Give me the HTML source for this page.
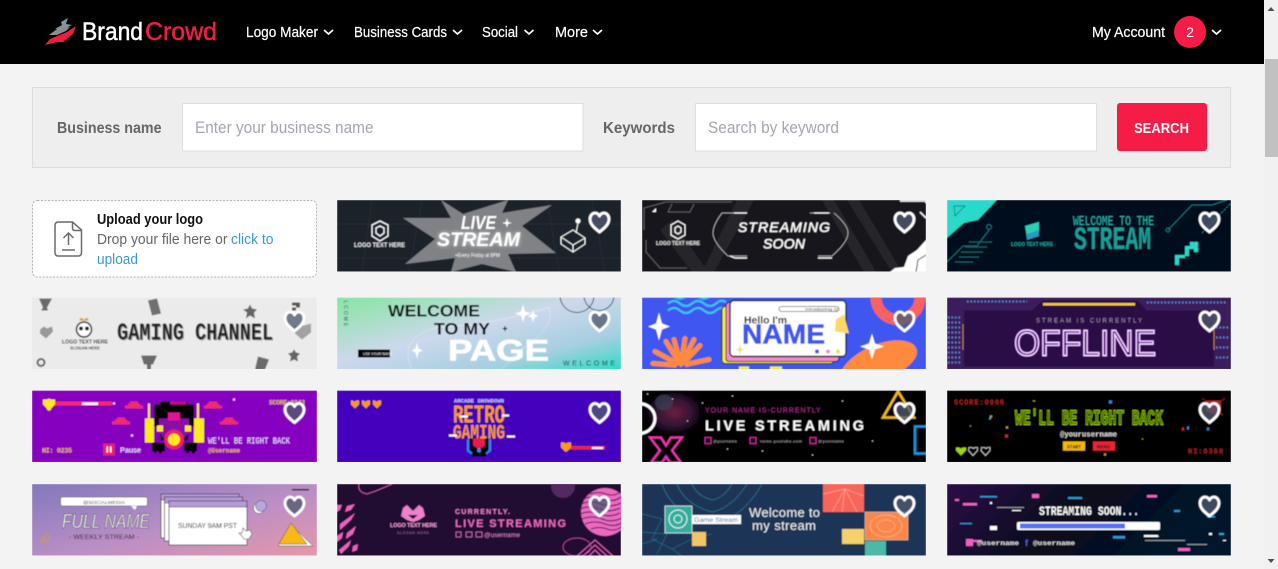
<!DOCTYPE html>
<html lang="en"><head><meta charset="utf-8"><title>BrandCrowd</title>
<style>
html,body{margin:0;padding:0;width:1278px;height:569px;overflow:hidden;background:#f3f3f3}
svg{display:block}
text{font-family:"Liberation Sans",sans-serif}
.m{font-family:"Liberation Mono",monospace;font-weight:700}
.b{font-weight:700}
</style></head><body>
<svg width="1278" height="569" viewBox="0 0 1278 569" xmlns="http://www.w3.org/2000/svg">
<defs>
<filter id="s" x="-5%" y="-5%" width="110%" height="110%"><feGaussianBlur stdDeviation="0.4"/></filter>
<filter id="g" x="-30%" y="-50%" width="160%" height="200%"><feGaussianBlur stdDeviation="2.2"/></filter>
<path id="h" d="M0 10.5C-5 6.5-9.5 3-9.5-2.500-9.5-6-7-8.500-4.500-8.500-2.500-8.500-1-7.500 0-5.500 1-7.500 2.500-8.500 4.500-8.500 7-8.500 9.500-6 9.500-2.500 9.500 3 5 6.500 0 10.500Z" fill="#505a72" fill-opacity=".78" stroke="#fff" stroke-width="2.800" stroke-linejoin="round"/>
<path id="c" d="M-9 1h3v-2h2v-2h8v2h2v2h3v3h-18Z" fill="#f22a70"/>
<linearGradient id="gw" x1="0" y1="0" x2="1" y2="1"><stop offset="0" stop-color="#86e6a2"/><stop offset=".45" stop-color="#cdd8ec"/><stop offset=".75" stop-color="#a5cfe0"/><stop offset="1" stop-color="#2fdcc4"/></linearGradient>
<linearGradient id="gf" x1="0" y1="0" x2="1" y2="1"><stop offset="0" stop-color="#8378bd"/><stop offset=".55" stop-color="#bb8fc5"/><stop offset="1" stop-color="#e697a8"/></linearGradient>
<linearGradient id="gs" x1="0" y1="0" x2="1" y2=".25"><stop offset="0" stop-color="#2c0a48"/><stop offset=".5" stop-color="#08081c"/><stop offset="1" stop-color="#04192c"/></linearGradient>
<radialGradient id="gn" cx=".5" cy=".5" r=".5"><stop offset="0" stop-color="#6c2040"/><stop offset=".6" stop-color="#2a1030"/><stop offset="1" stop-color="#000" stop-opacity="0"/></radialGradient>
</defs>

<!-- page -->
<rect width="1278" height="569" fill="#f3f3f3"/>
<rect width="1264" height="64" fill="#000"/>

<!-- logo -->
<path d="M55 29 62 25 61 22 68 18 66 24 72 25 64 29Z" fill="#8595a0"/>
<path d="M49 35 57 29 70 27 66 31 57 35Z" fill="#8c8c8c"/>
<path d="M45 45 50 39 57 36 67 32 76 26 73 34 63 42 57 42Z" fill="#ee1c3f"/>
<text x="82" y="40" font-size="25" fill="#fff" stroke="#fff" stroke-width=".5" textLength="61" lengthAdjust="spacingAndGlyphs">Brand</text>
<text x="145" y="40" font-size="25" fill="#f01e45" stroke="#f01e45" stroke-width=".5" textLength="72" lengthAdjust="spacingAndGlyphs">Crowd</text>

<!-- nav -->
<g font-size="15" fill="#fff" stroke="#fff" stroke-width=".2">
<text x="246" y="37" textLength="72" lengthAdjust="spacingAndGlyphs">Logo Maker</text>
<text x="354" y="37" textLength="93" lengthAdjust="spacingAndGlyphs">Business Cards</text>
<text x="482" y="37" textLength="36" lengthAdjust="spacingAndGlyphs">Social</text>
<text x="555" y="37" textLength="33" lengthAdjust="spacingAndGlyphs">More</text>
<text x="1092" y="37" textLength="73" lengthAdjust="spacingAndGlyphs">My Account</text>
</g>
<g fill="none" stroke="#fff" stroke-width="1.700">
<path d="M324 30l4.500 4 4.500-4M453 30l4.500 4 4.500-4M524.500 30l4.500 4 4.500-4M593 30l4.500 4 4.500-4M1212 30l4.500 4 4.500-4"/>
</g>
<circle cx="1190" cy="32" r="16" fill="#f51c47"/>
<text x="1190" y="37" font-size="14" fill="#fff" text-anchor="middle">2</text>

<!-- scrollbar -->
<rect x="1264" width="14" height="569" fill="#f1f1f1"/>
<rect x="1265" y="59" width="13" height="98" fill="#c1c1c1"/>
<path d="M1267.500 11l3.500-4 3.500 4Z" fill="#505050"/>
<path d="M1267.500 559l3.500 4 3.500-4Z" fill="#505050"/>

<!-- search -->
<rect x="32.500" y="87.500" width="1198" height="80" fill="#eee" stroke="#dcdcdc"/>
<text x="57" y="133" font-size="16" fill="#666" class="b" textLength="104.500" lengthAdjust="spacingAndGlyphs">Business name</text>
<rect x="182.500" y="103.500" width="400.500" height="47.500" fill="#fff" stroke="#dedede"/>
<text x="195" y="133" font-size="16.500" fill="#a4a7b0" textLength="178.500" lengthAdjust="spacingAndGlyphs">Enter your business name</text>
<text x="603" y="133" font-size="16" fill="#666" class="b" textLength="72" lengthAdjust="spacingAndGlyphs">Keywords</text>
<rect x="695.500" y="103.500" width="401" height="47.500" fill="#fff" stroke="#dedede"/>
<text x="708" y="133" font-size="16.500" fill="#a4a7b0" textLength="131" lengthAdjust="spacingAndGlyphs">Search by keyword</text>
<rect x="1117" y="103" width="90" height="48" rx="3" fill="#f51c47"/>
<text x="1134" y="133" font-size="14.500" fill="#fff" class="b" textLength="55" lengthAdjust="spacingAndGlyphs">SEARCH</text>

<!-- upload -->
<rect x="32.500" y="200.500" width="284" height="76.500" rx="5" fill="#fff" stroke="#b5b5b5" stroke-dasharray="2 1.500"/>
<path d="M58.500 222H72.500L81.500 230V252.500Q81.500 256 78 256H58.500Q55 256 55 252.500V225.500Q55 222 58.500 222ZM72.500 222V228Q72.500 230.500 75 230.500H81.500" fill="none" stroke="#6a6a6a" stroke-width="1.500"/>
<path d="M68.500 245V233M63.500 238l5-5 5 5M62 250H75" fill="none" stroke="#6a6a6a" stroke-width="1.500"/>
<text x="97" y="224" font-size="14.500" fill="#111" class="b" textLength="106" lengthAdjust="spacingAndGlyphs">Upload your logo</text>
<text x="97" y="244" font-size="14.500" fill="#666" textLength="130.500" lengthAdjust="spacingAndGlyphs">Drop your file here or</text>
<text x="231" y="244" font-size="14.500" fill="#3a9ad0" textLength="42.500" lengthAdjust="spacingAndGlyphs">click to</text>
<text x="97" y="264" font-size="14.500" fill="#3a9ad0" textLength="41" lengthAdjust="spacingAndGlyphs">upload</text>

<!-- R1 C2 live stream -->
<svg x="337" y="200" width="284" height="71.500" viewBox="0 0 284 71.500"><g filter="url(#s)">
<rect width="284" height="72" fill="#1f242b"/>
<path d="M35 0 25 71M85 0 72 71M210 0 222 71M255 0 268 71M0 24H284M0 58H284" stroke="#2c3239" stroke-width=".6"/>
<path d="M104 0 126 14 171 0 165 13 215 5 185 26 219 53 171 54 179 72 145 64 114 72 118 58 68 64 98 39 66 18 114 18Z" fill="#808285"/>
<path d="M43 21l8 4v11l-8 5-8-5V25ZM43 26l4 2v5l-4 3-4-3v-5Z" fill="none" stroke="#fff" stroke-width="1.300"/>
<text x="17" y="47" font-size="6" fill="#e8e8e8" class="b" textLength="51" lengthAdjust="spacingAndGlyphs">LOGO TEXT HERE</text>
<text x="100" y="46" font-size="19" fill="#fff" class="b" font-style="italic" textLength="83" lengthAdjust="spacingAndGlyphs" filter="url(#g)" opacity=".7">STREAM</text>
<text x="124" y="29" font-size="18" fill="#fff" class="b" font-style="italic" textLength="35" lengthAdjust="spacingAndGlyphs">LIVE</text>
<text x="100" y="46" font-size="19" fill="#fff" class="b" font-style="italic" textLength="83" lengthAdjust="spacingAndGlyphs">STREAM</text>
<path d="M170 18l1 4 4 1-4 1-1 4-1-4-4-1 4-1Z" fill="#fff"/>
<text x="118" y="57" font-size="5" fill="#fff" textLength="45" lengthAdjust="spacingAndGlyphs">+Every Friday at 8PM</text>
<path d="M224 37 236 30 248 38 248 44 236 52 224 44ZM224 37 236 45 248 38M236 45V52M239 33 241 23" fill="none" stroke="#fff" stroke-width="1"/>
<circle cx="241" cy="21" r="2.500" fill="#fff"/>
<use href="#h" x="262.500" y="21.500"/>
</g></svg>

<!-- R1 C3 streaming soon -->
<svg x="642" y="200" width="284" height="71.500" viewBox="0 0 284 71.500"><g filter="url(#s)">
<rect width="284" height="72" fill="#17191c"/>
<path d="M60 72 95 0H112L72 72ZM180 0 222 72H234L192 0ZM205 0 250 72H260L217 0ZM30 20 66 72H50L18 30Z" fill="#25282c"/>
<path d="M2 30V8L24 2H90M30 4 26 12H48L52 4M4 40V52L18 68H45" fill="none" stroke="#6a6e72" stroke-width=".8"/>
<path d="M10 12l4-4v4Z" fill="#fff"/>
<path d="M86 13H105L80 13Q71 25 71 33 71 42 86 56H105M188 13H168M192 13Q206 25 206 33 206 42 190 56H176" fill="none" stroke="#c8c8c8" stroke-width=".7"/>
<path d="M92 13H105M172 13H187M88 56l5 2H105M176 58H190" stroke="#fff" stroke-width="1.200" fill="none"/>
<text x="96" y="32" font-size="14" fill="#fff" font-style="italic" stroke="#fff" stroke-width=".35" textLength="92" lengthAdjust="spacing">STREAMING</text>
<text x="121" y="48.500" font-size="14" fill="#fff" font-style="italic" stroke="#fff" stroke-width=".35" textLength="42" lengthAdjust="spacing">SOON</text>
<path d="M36 21l7 4v10l-7 4-7-4V25ZM36 26l3 2v4l-3 2-3-2v-4Z" fill="none" stroke="#fff" stroke-width="1.200"/>
<text x="14" y="45" font-size="5.500" fill="#e8e8e8" class="b" textLength="44" lengthAdjust="spacingAndGlyphs">LOGO TEXT HERE</text>
<path d="M248 72 253 68 262 67 266 56 275 50 284 40V72Z" fill="#fff"/>
<path d="M274 72 276 60 284 55" stroke="#333" fill="none" stroke-width="1"/>
<path d="M258 1H284V3M278 12 284 18" stroke="#fff" stroke-width="1.500" fill="none"/>
<use href="#h" x="262.500" y="21.500"/>
</g></svg>

<!-- R1 C4 welcome stream -->
<svg x="947" y="200" width="284" height="71.500" viewBox="0 0 284 71.500"><g filter="url(#s)">
<rect width="284" height="72" fill="#020b1f"/>
<path d="M0 0H50L31 20 17 23 0 38Z" fill="#2bd9cb"/>
<path d="M7 6H18L8 16Z" fill="none" stroke="#0d6a70" stroke-width=".7"/>
<path d="M0 62 16 46H30L42 30" fill="none" stroke="#1a8f90" stroke-width=".7"/>
<circle cx="42" cy="27" r="2.500" fill="none" stroke="#1a8f90" stroke-width=".7"/>
<path d="M22 42H45M18 47H40M14 52H36M12 57H32M8 62H26" stroke="#12626a" stroke-width="1.200"/>
<path d="M221 30 245 5H265L280 0" fill="none" stroke="#1a8f90" stroke-width=".7"/>
<circle cx="221" cy="30" r="2" fill="none" stroke="#1a8f90" stroke-width=".7"/>
<path d="M255 33 284 3" stroke="#1a9a9a" stroke-width=".8" stroke-dasharray="2 1.500"/>
<path d="M78 26 92 22 92 36 80 40Z" fill="#2b9bc0"/>
<path d="M78 26 92 22 92 30 80 34Z" fill="#2bd0b8"/>
<text x="64" y="46" font-size="5" fill="#1fa8a8" class="b" textLength="42" lengthAdjust="spacingAndGlyphs">LOGO TEXT HERE</text>
<text x="126" y="25" font-size="14" fill="#2bb5ae" font-family="Liberation Mono" style="font-family:'Liberation Mono',monospace" textLength="81" lengthAdjust="spacingAndGlyphs">WELCOME TO THE</text>
<text x="127" y="49" font-size="32" fill="#1f9d98" class="m" textLength="77" lengthAdjust="spacingAndGlyphs">STREAM</text>
<path d="M228 55H238V58H232V65H228ZM238 46H248V49H242V56H238ZM249 42H251V52H247V46H243V42Z" fill="#2bd9cb"/>
<use href="#h" x="262.500" y="21.500"/>
</g></svg>

<!-- R2 C1 gaming -->
<svg x="32" y="297.500" width="285" height="71.500" viewBox="0 0 285 71.500"><g filter="url(#s)">
<rect width="285" height="72" fill="#ebebeb"/>
<path d="M7 1H20L15 10 16 13H9L11 10Z" fill="#6a6a6a"/>
<path d="M153 3 162 1 166 16 157 18Z" transform="translate(-37 0)" fill="#6f6f6f"/>
<path d="M218 7l2 4 5 1-3 3 1 6-5-3-4 3 1-6-4-3 5-1Z" fill="#666"/>
<path d="M260 5h8v5h-4v3h-4v-3h4V8h-4Z" fill="#555"/>
<path d="M8 32 12 29 15 31 20 29 21 34 14 41 8 36Z" fill="#999"/>
<path d="M262 28 272 28 279 26 279 35 270 42 263 36Z" fill="#a2a2a2"/>
<path d="M109 58H125L121 67H119V72H115V67H112Z" fill="#6a6a6a"/>
<path d="M226 59 237 62 233 72H223Z" fill="#6a6a6a"/>
<path d="M262 52l2 3 4 1-3 3 1 5-4-2-4 2 1-5-3-3 4-1Z" fill="#666"/>
<circle cx="9" cy="65" r="3.500" fill="none" stroke="#666" stroke-width="2"/>
<circle cx="52" cy="32" r="7.500" fill="#fff" stroke="#222" stroke-width="1.500"/>
<circle cx="49" cy="31" r="2" fill="#222"/><circle cx="55" cy="31" r="2" fill="#222"/>
<path d="M47 23l2-3 3 2 3-2 2 3Z" fill="#d9a520"/>
<text x="30" y="46" font-size="5.500" fill="#222" class="b" textLength="46" lengthAdjust="spacingAndGlyphs">LOGO TEXT HERE</text>
<text x="38" y="52" font-size="4.500" fill="#333" class="b" textLength="30" lengthAdjust="spacingAndGlyphs">SLOGAN HERE</text>
<text x="86" y="43" font-size="24" fill="#9a9a9a" class="m" textLength="156" lengthAdjust="spacingAndGlyphs">GAMING CHANNEL</text>
<text x="85" y="42" font-size="24" fill="#222" class="m" textLength="156" lengthAdjust="spacingAndGlyphs">GAMING CHANNEL</text>
<use href="#h" x="262.500" y="23"/>
</g></svg>

<!-- R2 C2 welcome page -->
<svg x="337" y="297.500" width="284" height="71.500" viewBox="0 0 284 71.500"><g filter="url(#s)">
<rect width="284" height="72" fill="url(#gw)"/>
<path d="M75 72Q60 40 100 30 150 28 212 10 220 30 180 55 170 65 165 72" fill="none" stroke="#fff" stroke-opacity=".6" stroke-width=".5"/>
<circle cx="240" cy="-2" r="17" fill="none" stroke="#222" stroke-width=".8"/>
<circle cx="262" cy="-2" r="15" fill="none" stroke="#222" stroke-width=".8"/>
<text x="7" y="3" font-size="5" fill="#333" transform="rotate(90 7 3)" letter-spacing="2">LCOME</text>
<text x="51" y="19" font-size="17" fill="#111" class="b" textLength="92" lengthAdjust="spacingAndGlyphs">WELCOME</text>
<text x="97" y="37" font-size="17" fill="#111" class="b" textLength="56" lengthAdjust="spacingAndGlyphs">TO MY</text>
<path d="M168 28l.8 2.500 2.200.5-2.200.8-.8 2.500-.8-2.500-2.200-.8 2.200-.5Z" fill="#111"/>
<text x="111" y="63" font-size="30" fill="#fff" stroke="#fff" stroke-width=".6" class="b" textLength="101" lengthAdjust="spacingAndGlyphs">PAGE</text>
<path d="M186 7l2 7 6 2-6 2-2 7-2-7-6-2 6-2ZM196 12l1.500 5 4 1.500-4 1.500-1.500 5-1.500-5-4-1.500 4-1.500ZM80 45l1.500 6 4 2-4 2-1.500 6-1.500-6-4-2 4-2Z" fill="#fff"/>
<rect x="21" y="52" width="32" height="8" fill="#000"/>
<text x="26" y="57.500" font-size="3.500" fill="#fff">USE YOUR NAME</text>
<text x="226" y="68" font-size="7" fill="#123" letter-spacing="2" textLength="54">WELCOME</text>
<use href="#h" x="262.500" y="23"/>
</g></svg>

<!-- R2 C3 name -->
<svg x="642" y="297.500" width="284" height="71.500" viewBox="0 0 284 71.500"><g filter="url(#s)">
<rect width="284" height="72" fill="#4157f0"/>
<path d="M26 6q6-5 12 0t12 0 12 0 12 0 10-1M26 13q6-5 12 0t12 0 12 0 12 0 10-1M32-1q6 4 12 0t12 0 12 0" fill="none" stroke="#38c5ee" stroke-width="2.200"/>
<circle cx="256" cy="0" r="22" fill="none" stroke="#fc6060" stroke-width="11"/>
<path d="M17 15l3 11 8 3-8 3-3 11-3-11-8-3 8-3Z" fill="#fff"/>
<path d="M39 68 13 54M39 68 24 44M39 68 43 41M39 68 58 48M39 68 67 62M39 68 11 66M39 68 32 42M39 68 52 42" stroke="#ff8a3c" stroke-width="5" stroke-linecap="round"/>
<path d="M33 72l3-5 3 3 3-3 3 5Z" fill="#4157f0"/>
<rect x="80" y="9" width="112" height="57" rx="3" fill="#f3ee38" stroke="#15153a" stroke-width="1"/>
<rect x="84" y="5" width="113" height="59" rx="3" fill="#f58ac8" stroke="#15153a" stroke-width="1"/>
<rect x="88" y="3" width="116" height="56" rx="4" fill="#fff" stroke="#15153a" stroke-width="1.400"/>
<rect x="137" y="9" width="60" height="5" rx="2.500" fill="#fff" stroke="#222" stroke-width=".6"/>
<text x="163" y="13" font-size="4" fill="#111" textLength="33" lengthAdjust="spacingAndGlyphs">Introducing Q</text>
<text x="102" y="26" font-size="10.500" fill="#111" class="b" textLength="43" lengthAdjust="spacingAndGlyphs">Hello I'm</text>
<text x="100" y="46" font-size="28" fill="#4157f0" stroke="#4157f0" stroke-width=".6" class="b" textLength="83" lengthAdjust="spacingAndGlyphs">NAME</text>
<path d="M194 22 202 17 207 36 193 34Z" fill="#ffd860"/>
<path d="M98 47l1 4 3 1-3 1-1 4-1-4-3-1 3-1Z" fill="#e6e63a"/>
<circle cx="175" cy="54" r="2" fill="#4157f0"/><circle cx="186" cy="54" r="2" fill="#f58ac8"/><circle cx="196" cy="54" r="2" fill="#e6e63a"/>
<path d="M200 72C212 52 250 36 270 46 282 55 270 66 262 72Z" fill="#ff8a3c"/>
<path d="M230 36l3 10 9 3-9 3-3 10-3-10-9-3 9-3Z" fill="#fff"/>
<rect x="97" y="69" width="10" height="3" fill="#f3ee38"/><rect x="128" y="69" width="12" height="3" fill="#f3ee38"/>
<use href="#h" x="262.500" y="23"/>
</g></svg>

<!-- R2 C4 offline -->
<svg x="947" y="297.500" width="284" height="71.500" viewBox="0 0 284 71.500"><g filter="url(#s)">
<rect width="284" height="72" fill="#3b1a5c"/>
<path d="M1 20H15M1 25H15M1 30H15M1 35H15M1 40H15M1 45H15M1 50H15M1 55H15M1 60H15M1 65H15M269 30H283M269 40H283M269 50H283M269 60H283M20 4H80M200 5H280" stroke="#5f7fd0" stroke-width="2" stroke-dasharray="1.500 2"/>
<path d="M17 13H85L96 3H190L200 13H267V69H17Z" fill="#2b0845"/>
<rect x="96" y="5.500" width="92" height="2.500" fill="#f7c830"/>
<path d="M16 27V52M267 27V52" stroke="#f7a830" stroke-width="1" stroke-dasharray="1 1"/>
<text x="89" y="25" font-size="6" fill="#9d8fae" textLength="106" lengthAdjust="spacing">STREAM IS CURRENTLY</text>
<text x="67" y="58" font-size="36" fill="none" stroke="#a034d0" stroke-width="2.200" textLength="142" lengthAdjust="spacingAndGlyphs">OFFLINE</text>
<text x="67" y="58" font-size="36" fill="none" stroke="#fff" stroke-width=".9" textLength="142" lengthAdjust="spacingAndGlyphs">OFFLINE</text>
<use href="#h" x="262.500" y="23"/>
</g></svg>

<!-- R3 C1 pixel -->
<svg x="32" y="390.500" width="285" height="71.500" viewBox="0 0 285 71.500"><g filter="url(#s)">
<rect width="285" height="72" fill="#8605c0"/>
<rect x="22" y="11" width="58" height="4" fill="#f22a70"/><rect x="50" y="12" width="16" height="2.500" fill="#fff"/>
<path d="M11 9h4l2-1 2 1h4v5l-3 3-2 3h-2l-2-3-3-3Z" fill="#ffe81a"/>
<path d="M81 12h2v2h-2ZM201 8h2v2h-2ZM99 44h2v2h-2Z" fill="#f5d0ff"/>
<use href="#c" x="102" y="14"/><use href="#c" x="181" y="14"/><use href="#c" x="89" y="30"/><use href="#c" x="197" y="30"/>
<path d="M116 13h2v17h-2ZM165 13h2v17h-2Z" fill="#ffe81a"/>
<path d="M113 28h9v24h-9ZM162 28h10v24h-10Z" fill="#ffe81a"/>
<path d="M122 14h6v-3h28v3h6v22h-6v14h-28V36h-6Z" fill="#000"/>
<path d="M138 11h16v3h-16Z" fill="#c01090"/>
<path d="M127 28h10l5-5 5 5h10v14l-7 8-8 3-8-3-7-8Z" fill="#8a0ea8"/>
<path d="M136 22h12v8h-12Z" fill="#e01590"/>
<path d="M125 35h6v6h-6ZM153 35h6v6h-6Z" fill="#ffe81a"/>
<circle cx="142" cy="49" r="10" fill="#ea2070"/>
<circle cx="142" cy="49" r="6" fill="#ffe81a"/>
<path d="M120 52h13v9h-3v2h-3v-2h-3v2h-2v-2h-2ZM152 52h13v9h-2v2h-3v-2h-3v2h-3v-2h-2Z" fill="#000"/>
<rect x="71" y="53" width="12" height="12" fill="#ea1e74"/>
<rect x="74.500" y="56" width="1.500" height="6" fill="#fff"/><rect x="78" y="56" width="1.500" height="6" fill="#fff"/>
<text x="88" y="62" font-size="7" fill="#fff" textLength="21" lengthAdjust="spacingAndGlyphs">Pause</text>
<text x="10" y="62" font-size="6.500" fill="#f0c030" class="m" textLength="30" lengthAdjust="spacing">HI: 0235</text>
<text x="176" y="53" font-size="9" fill="#f3e8ff" style="font-family:'Liberation Mono',monospace" textLength="82" lengthAdjust="spacingAndGlyphs">WE'LL BE RIGHT BACK</text>
<text x="176" y="62" font-size="6.500" fill="#f0c030" class="m" textLength="32" lengthAdjust="spacingAndGlyphs">@Username</text>
<text x="237" y="14" font-size="6.500" fill="#e0c040" class="m" textLength="36" lengthAdjust="spacing">SCORE:0843</text>
<use href="#h" x="262.500" y="21.500"/>
</g></svg>

<!-- R3 C2 retro -->
<svg x="337" y="390.500" width="284" height="71.500" viewBox="0 0 284 71.500"><g filter="url(#s)">
<rect width="284" height="72" fill="#4404be"/>
<g fill="#ff9a10"><path d="M14 10h1.500l2 1.200 2-1.200H22v4l-4 4-4-4Z"/><path d="M25 10h1.500l2 1.200 2-1.200H33v4l-4 4-4-4Z"/><path d="M36 10h1.500l2 1.200 2-1.200H44v4l-4 4-4-4Z"/></g>
<text x="117" y="12" font-size="5.500" fill="#c8d4ff" class="m" textLength="50" lengthAdjust="spacingAndGlyphs">ARCADE SHOWDOWN</text>
<path d="M133 47h18v14l-2 3v2h-14v-2l-2-3Z" fill="#000"/>
<path d="M131 49V60l4 3M153 49V60l-4 3" stroke="#1f8ff0" stroke-width="2" fill="none"/>
<path d="M136 48h12v7l-6 4-6-4Z" fill="#e61e50"/>
<circle cx="142" cy="60" r="2" fill="#1f8ff0"/>
<text x="116" y="32" font-size="26" fill="#ff9a10" class="m" textLength="52" lengthAdjust="spacingAndGlyphs">RETRO</text>
<text x="116" y="48" font-size="20" fill="#ff9a10" class="m" textLength="52" lengthAdjust="spacingAndGlyphs">GAMING</text>
<path d="M123 25h8v2h-8ZM165 24h7v2h-7ZM112 44h8v2h-8ZM170 45h8v2h-8Z" fill="#fff"/>
<rect x="230" y="55.500" width="38" height="3.500" fill="#ed2040"/><rect x="255" y="56.500" width="11" height="2" fill="#fff"/>
<path d="M224 52h3l2 1 2-1h3v5l-4 4h-2l-4-4Z" fill="#ff9a10"/>
<use href="#h" x="262.500" y="21.500"/>
</g></svg>

<!-- R3 C3 live streaming -->
<svg x="642" y="390.500" width="284" height="71.500" viewBox="0 0 284 71.500"><g filter="url(#s)">
<rect width="284" height="72" fill="#000"/>
<ellipse cx="32" cy="22" rx="34" ry="26" fill="url(#gn)"/>
<ellipse cx="22" cy="12" rx="9" ry="8" fill="#3a4258" opacity=".7"/>
<path d="M-3 13a16 15 0 0 1 0 30" fill="none" stroke="#fff" stroke-width="3"/>
<path d="M8 47H19L24 55 29 47H40L30 60 39 72H28L24 66 20 72H9L18 60Z" fill="#000" stroke="#f035b0" stroke-width="2.200"/>
<path d="M256 1 241 27H272Z" fill="none" stroke="#f7b90f" stroke-width="2.500"/>
<path d="M284 36H273V63H284" fill="none" stroke="#1c97e0" stroke-width="2.500"/>
<text x="63" y="22" font-size="7" fill="#a82c8c" letter-spacing="1.300" textLength="117">YOUR NAME IS-CURRENTLY</text>
<text x="63" y="40" font-size="14.500" fill="#fff" class="b" textLength="159" lengthAdjust="spacing">LIVE STREAMING</text>
<rect x="63" y="47" width="6" height="6" fill="none" stroke="#d02c9c"/><rect x="108" y="47" width="6" height="6" fill="none" stroke="#d02c9c"/><rect x="168" y="47" width="6" height="6" fill="none" stroke="#d02c9c"/>
<g font-size="4" fill="#bbb"><text x="71" y="52" textLength="24">@yourname</text><text x="118" y="52" textLength="42">name.youtube.com</text><text x="176" y="52" textLength="26">@yourname</text></g>
<path d="M5 3h1v1H5ZM30 8h1v1h-1ZM60 12h1v1h-1ZM90 5h1v1h-1ZM45 30h1v1h-1ZM120 60h1v1h-1ZM170 64h1v1h-1ZM230 50h1v1h-1ZM85 58h1v1h-1ZM200 10h1v1h-1Z" fill="#ddd"/>
<use href="#h" x="262.500" y="21.500"/>
</g></svg>

<!-- R3 C4 right back -->
<svg x="947" y="390.500" width="284" height="71.500" viewBox="0 0 284 71.500"><g filter="url(#s)">
<rect width="284" height="72" fill="#000"/>
<text x="7" y="14" font-size="7" fill="#b22020" class="m" textLength="50" lengthAdjust="spacing">SCORE:0900</text>
<path d="M259 10H274V20L267 24 259 20Z" fill="#b81e1e"/><path d="M255 8l5 3M278 8l-5 3M276 25l-4-4" stroke="#a01818"/>
<text x="68" y="34" font-size="21" fill="none" stroke="#9cd80c" stroke-width=".9" class="m" textLength="148" lengthAdjust="spacingAndGlyphs">WE'LL BE RIGHT BACK</text>
<text x="68" y="34" font-size="21" fill="#7da80a" fill-opacity=".55" class="m" textLength="148" lengthAdjust="spacingAndGlyphs">WE'LL BE RIGHT BACK</text>
<text x="113" y="46" font-size="7.500" fill="#ddd" class="m" textLength="57" lengthAdjust="spacingAndGlyphs">@yourusername</text>
<rect x="116" y="51" width="22" height="9" fill="#f5b800"/><text x="120" y="58" font-size="5.500" fill="#222" class="m" textLength="14" lengthAdjust="spacingAndGlyphs">START</text>
<rect x="146" y="51" width="22" height="9" fill="#ee2030"/><text x="150" y="58" font-size="5.500" fill="#222" class="m" textLength="13" lengthAdjust="spacingAndGlyphs">MENU</text>
<path d="M9 57h3l2 1 2-1h3v3l-5 5-5-5Z" fill="#9cd80c"/>
<path d="M22 57h3l1.500 1 1.500-1h2.500v3l-4.500 5-4.500-5ZM34.500 57h3l1.500 1 1.500-1h2.500v3l-4.500 5-4.500-5Z" fill="none" stroke="#ddd" stroke-width=".8"/>
<text x="241" y="63" font-size="7" fill="#b22020" class="m" textLength="35" lengthAdjust="spacing">HI:0360</text>
<path d="M43 25h2v2h-2ZM59 36h2v2h-2ZM23 35h1v1h-1ZM157 63h2v2h-2ZM86 10h2v1h-2ZM195 48h1v1h-1Z" fill="#c8a020"/>
<path d="M162 10h3v3h-3ZM240 36h2v3h-2ZM260 37h2v3h-2ZM42 27h2v2h-2Z" fill="#2a88d8"/>
<path d="M58 44h3v3h-3ZM235 37h2v3h-2Z" fill="#cc2030"/>
<use href="#h" x="262.500" y="21.500"/>
</g></svg>

<!-- R4 C1 full name -->
<svg x="32" y="484" width="285" height="71.500" viewBox="0 0 285 71.500"><g filter="url(#s)">
<rect width="285" height="72" fill="url(#gf)"/>
<rect x="260" y="5" width="17" height="1.500" fill="#111"/>
<rect x="28.500" y="13" width="87" height="9" rx="2" fill="#fff" stroke="#333" stroke-width=".6"/>
<path d="M99 22l4 4 2-4Z" fill="#fff"/>
<text x="51" y="20" font-size="4.500" fill="#333" textLength="42" lengthAdjust="spacingAndGlyphs">@SOCIALMEDIA</text>
<text x="30" y="44" font-size="20" fill="#fff" stroke="#222" stroke-width=".5" font-style="italic" textLength="88" lengthAdjust="spacingAndGlyphs">FULL NAME</text>
<text x="37" y="55" font-size="6.500" fill="#222" textLength="70" lengthAdjust="spacingAndGlyphs">- WEEKLY STREAM -</text>
<path d="M11 53l2 3-2 3-2-3ZM15 50l3 4-3 4-3-4Z" fill="none" stroke="#c9a020" stroke-width=".9"/>
<rect x="129" y="10" width="78" height="44" fill="#fff" stroke="#333" stroke-width=".7"/>
<rect x="129" y="10" width="78" height="6" fill="#b49ad8" stroke="#333" stroke-width=".5"/>
<rect x="132.500" y="13" width="78" height="44" fill="#fff" stroke="#333" stroke-width=".7"/>
<rect x="132.500" y="13" width="78" height="6" fill="#b49ad8" stroke="#333" stroke-width=".5"/>
<rect x="137" y="17" width="78" height="44" fill="#fff" stroke="#333" stroke-width=".7"/>
<rect x="137" y="17" width="78" height="6" fill="#b49ad8" stroke="#333" stroke-width=".5"/>
<text x="146" y="44" font-size="7" fill="#222" textLength="59" lengthAdjust="spacingAndGlyphs">SUNDAY 9AM PST</text>
<path d="M211 44l3 3 4-1 2 4-3 5h-5l-3-4-2-2 3 0Z" fill="#fff" stroke="#333" stroke-width=".6"/>
<circle cx="227" cy="24" r="5.500" fill="#fff" stroke="#333" stroke-width=".5"/>
<circle cx="229" cy="22" r="5.500" fill="#b8a6e0" stroke="#333" stroke-width=".5"/>
<path d="M259 41 281 62H246Z" fill="#fff" stroke="#333" stroke-width=".5"/>
<path d="M259 39 275 60H247Z" fill="#f7b915" stroke="#333" stroke-width=".5"/>
<use href="#h" x="262.500" y="21.500"/>
</g></svg>

<!-- R4 C2 live streaming pink -->
<svg x="337" y="484" width="284" height="71.500" viewBox="0 0 284 71.500"><g filter="url(#s)">
<rect width="284" height="72" fill="#200e33"/>
<path d="M22 0Q20 8 30 10 42 6 55 0" fill="none" stroke="#e060b0" stroke-width=".8"/>
<path d="M0 21 5 21 3 26 0 28ZM10 22 18 20 14 26 8 28ZM3 40 18 29 14 36 3 46ZM0 52 6 48 5 54 0 58ZM10 49 19 42 16 50 9 55ZM2 66 14 56 12 62 4 70ZM16 62 21 60 20 66 15 68Z" fill="#f060c0"/>
<circle cx="268" cy="28" r="24" fill="#ee68c0"/>
<path d="M246 15q10-4 20 0t18-2M244 20q10-4 20 0t20-1M243 25q10-4 20 0t20-1M243 30q10-4 20 0t20-1M245 35q10-4 20 0t20-1M248 40q10-4 20 0t18-2M254 45q8-3 16 0t14-2M253 10q8-3 16 0t14-2" stroke="#4a1c50" stroke-width="1.100" fill="none"/>
<circle cx="226" cy="2" r="12" fill="#6a3570" opacity=".7"/>
<path d="M240 72 258 56 276 72M246 72 258 61 270 72M252 72 258 66 264 72" fill="none" stroke="#f060c0" stroke-width="1"/>
<ellipse cx="240" cy="63" rx="14" ry="9" fill="none" stroke="#c94fa8" stroke-width=".7"/>
<path d="M66 24 70 21 76 27 82 21 86 24 88 32 82 36 76 38 70 36 64 32Z" fill="#f080cc"/>
<path d="M71 31h10l-5 4Z" fill="#200e33"/>
<text x="53" y="43" font-size="5.500" fill="#f0a0d8" class="b" textLength="47" lengthAdjust="spacing">LOGO TEXT HERE</text>
<text x="60" y="50" font-size="3.500" fill="#a070a0" textLength="32">SLOGAN HERE</text>
<text x="118" y="30" font-size="7" fill="#f080cc" class="b" textLength="55" lengthAdjust="spacing">CURRENTLY.</text>
<text x="118" y="43" font-size="11" fill="#f069c0" class="b" textLength="111" lengthAdjust="spacing">LIVE STREAMING</text>
<rect x="119" y="48" width="5" height="5" fill="none" stroke="#d070b8" stroke-width=".8"/><rect x="129" y="48" width="6" height="5" fill="none" stroke="#d070b8" stroke-width=".8"/><rect x="139" y="48" width="6" height="5" fill="none" stroke="#d070b8" stroke-width=".8"/>
<text x="147" y="53" font-size="6.500" fill="#e080c0" textLength="36" lengthAdjust="spacingAndGlyphs">@username</text>
<use href="#h" x="262.500" y="21.500"/>
</g></svg>

<!-- R4 C3 welcome stream navy -->
<svg x="642" y="484" width="284" height="71.500" viewBox="0 0 284 71.500"><g filter="url(#s)">
<rect width="284" height="72" fill="#1e3557"/>
<path d="M20 0Q30 30 70 40 100 35 120 0M35 0Q42 20 70 28 90 24 105 0M50 0Q55 12 70 16 82 14 90 0" fill="none" stroke="#2f7a94" stroke-width=".7"/>
<path d="M0 30 20 35 10 55 30 65 50 55 70 50M0 48 25 50 15 70M30 65 40 72M0 60 15 55" fill="none" stroke="#2a7fa0" stroke-width=".5"/>
<rect x="181" width="41" height="28" fill="#f8665a"/>
<path d="M190 28 203 5 215 28M203 5 200 28M181 10 203 5 222 12" stroke="#fbd0c8" stroke-width=".4" fill="none"/>
<rect x="223" y="28" width="43" height="28" fill="#fb8648" stroke="#d9d9d9" stroke-width=".5"/>
<ellipse cx="244" cy="42" rx="16" ry="11" fill="none" stroke="#ffcfb0" stroke-width=".5"/><ellipse cx="244" cy="42" rx="9" ry="6" fill="none" stroke="#ffcfb0" stroke-width=".5"/>
<rect x="200" y="45" width="22" height="15" fill="#f6d06a"/>
<rect x="223" y="57" width="21" height="15" fill="#4cb8a8"/>
<rect x="23" y="22" width="27" height="27" fill="#30ad9d" stroke="#dfe8e8" stroke-width=".8"/>
<ellipse cx="36" cy="35" rx="9" ry="9" fill="none" stroke="#e6f6f2" stroke-width="1"/><ellipse cx="36" cy="35" rx="4" ry="4" fill="none" stroke="#e6f6f2" stroke-width="1"/>
<rect x="50" y="48" width="14" height="14" fill="#efc668"/>
<rect x="50" y="31" width="49" height="9" fill="#fff"/>
<text x="52" y="38" font-size="6.500" fill="#2a5f8f" textLength="44" lengthAdjust="spacingAndGlyphs">Game Stream</text>
<text x="107" y="33" font-size="13" fill="#f0f0f0" textLength="71" lengthAdjust="spacing">Welcome to</text>
<text x="110" y="46" font-size="13" fill="#f0f0f0" textLength="64" lengthAdjust="spacing">my stream</text>
<use href="#h" x="262.500" y="21.500"/>
</g></svg>

<!-- R4 C4 streaming soon -->
<svg x="947" y="484" width="284" height="71.500" viewBox="0 0 284 71.500"><g filter="url(#s)">
<rect width="284" height="72" fill="url(#gs)"/>
<path d="M8 15h4v2H8ZM16 19h14v2.500H16ZM85 10h7v4h-7ZM200 11h10v2.500h-10ZM23 56h12v2H23ZM231 64h12v3h-12Z" fill="#f060c0"/>
<path d="M33 12h17v1.500H33ZM121 13h14v2h-14ZM13 39h12v1.200H13ZM166 52h12v2.500h-12ZM227 26h6v2h-6ZM260 32h8v1.500h-8Z" fill="#2a9ad8"/>
<path d="M50 23h27v1H50ZM197 52h15v1h-15ZM198 56h40v1h-40ZM240 60h20v1h-20Z" fill="#999"/>
<path d="M43 18h2v2h-2ZM65 26h9v1h-9ZM43 42h7v4h-7ZM197 51h14v2h-14ZM262 49h3v2h-3ZM276 56h3v1h-3Z" fill="#fff"/>
<rect x="272" y="49" width="5" height="2" fill="#2ac"/>
<text x="92" y="31" font-size="13" fill="#fff" class="m" textLength="100" lengthAdjust="spacingAndGlyphs">STREAMING SOON...</text>
<rect x="70" y="38" width="143" height="8" rx="1.500" fill="#fff"/>
<rect x="73" y="39.500" width="105" height="5" fill="#5570f0"/>
<rect x="19" y="55" width="7" height="7" fill="#f060c0"/>
<text x="30" y="61" font-size="6.500" fill="#ddd" class="m" textLength="42" lengthAdjust="spacingAndGlyphs">@username</text>
<text x="78" y="62" font-size="9" fill="#4a60e0" class="b">f</text>
<text x="86" y="61" font-size="6.500" fill="#ddd" class="m" textLength="42" lengthAdjust="spacingAndGlyphs">@username</text>
<use href="#h" x="262.500" y="21.500"/>
</g></svg>
</svg>
</body></html>
